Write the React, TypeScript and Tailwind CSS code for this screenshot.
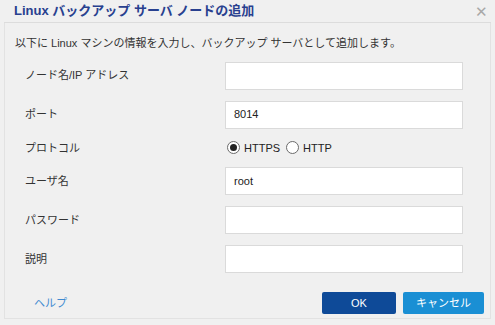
import React from 'react';

const font = { fontFamily: '"Liberation Sans", "Noto Sans CJK JP", sans-serif' };

/* ── Form rows ── */
const rows = [
  { label: 'ノード名/IP アドレス', kind: 'input', value: '' },
  { label: 'ポート', kind: 'input', value: '8014' },
  { label: 'プロトコル', kind: 'radio', value: '' },
  { label: 'ユーザ名', kind: 'input', value: 'root' },
  { label: 'パスワード', kind: 'input', value: '' },
  { label: '説明', kind: 'input', value: '' },
];

const Radio = ({ checked, label }: { checked: boolean; label: string }) => (
  <span className="flex items-center gap-[4px]">
    <span className="w-[13px] h-[13px] rounded-full border border-[#6b6b6b] bg-white flex items-center justify-center">
      {checked && <span className="w-[7px] h-[7px] rounded-full bg-[#222]" />}
    </span>
    <span className="text-[11px] text-[#222]">{label}</span>
  </span>
);

const App = () => (
  <div className="w-[495px] h-[325px] bg-[#f0f0f0] flex flex-col" style={font}>
    {/* Title bar */}
    <div className="h-[23px] flex items-center justify-between pl-[10px] pr-[3px] border-b border-[#dcdcdc] mx-[4px]">
      <span className="text-[13px] font-bold text-[#28408f]">Linux バックアップ サーバ ノードの追加</span>
      <span className="text-[#a8a8a8] text-[15px] leading-none">✕</span>
    </div>

    {/* Body */}
    <div className="flex-1 mx-[4px] mb-[6px] border-x border-b border-[#e2e2e2] flex flex-col">
      <p className="text-[11px] text-[#333] pl-[10px] pt-[12px] pb-[10px]">
        以下に Linux マシンの情報を入力し、バックアップ サーバとして追加します。
      </p>

      <div className="flex flex-col gap-[11px] pl-[20px]">
        {rows.map((r) => (
          <div key={r.label} className="flex items-center">
            <span className="w-[200px] text-[11px] text-[#333]">{r.label}</span>
            {r.kind === 'input' ? (
              <div className="w-[238px] h-[28px] bg-white border border-[#dadada] flex items-center px-[8px] text-[11px] text-[#222]">
                {r.value}
              </div>
            ) : (
              <div className="flex items-center gap-[6px] h-[14px] pl-[2px]">
                <Radio checked label="HTTPS" />
                <Radio checked={false} label="HTTP" />
              </div>
            )}
          </div>
        ))}
      </div>

      {/* Footer */}
      <div className="mt-auto mb-[4px] flex items-center justify-between pl-[29px] pr-[6px]">
        <span className="text-[11px] text-[#3f8ad0]">ヘルプ</span>
        <div className="flex gap-[7px]">
          <button className="w-[74px] h-[22px] rounded-[2px] bg-[#0e4a98] text-white text-[11px]">OK</button>
          <button className="w-[81px] h-[22px] rounded-[2px] bg-[#1a8fd4] text-white text-[11px]">キャンセル</button>
        </div>
      </div>
    </div>
  </div>
);

export default App;
